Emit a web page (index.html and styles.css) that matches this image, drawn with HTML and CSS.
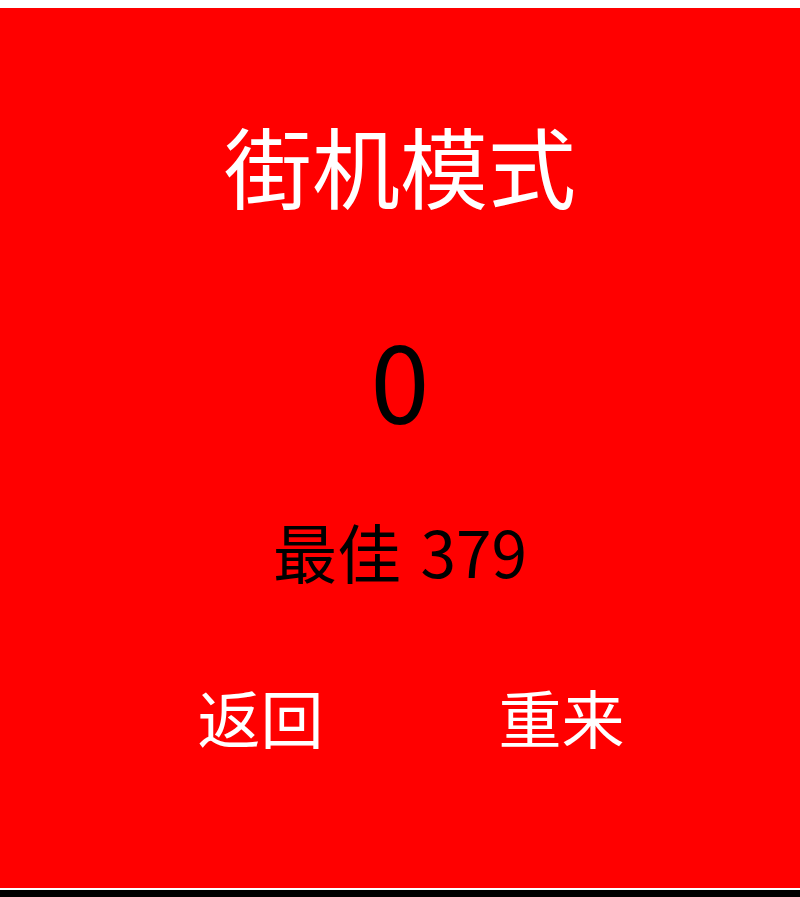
FILE: index.html
```html
<!DOCTYPE html>
<html lang="zh">
<head>
<meta charset="utf-8">
<link rel="stylesheet" href="styles.css">
</head>
<body>
<div class="screen">
  <h1 class="title">街机模式</h1>
  <div class="score">0</div>
  <div class="best">最佳 379</div>
  <div class="actions">
    <button class="btn btn-back">返回</button>
    <button class="btn btn-retry">重来</button>
  </div>
</div>
<div class="footer"></div>
</body>
</html>
```
FILE: styles.css
```css
html, body {
  margin: 0;
  padding: 0;
  background: #fff;
}
body {
  padding-top: 8px;
  font-family: "Noto Sans CJK SC", "Noto Sans", sans-serif;
  overflow: hidden;
  height: 897px;
  box-sizing: border-box;
}
.screen {
  background: #ff0000;
  height: 880px;
  display: flex;
  flex-direction: column;
  align-items: center;
}
.title {
  margin: 94px 0 0 0;
  font-size: 88px;
  font-weight: 400;
  line-height: 124px;
  color: #fff;
}
.score {
  margin-top: 87px;
  font-size: 106px;
  line-height: 130px;
  color: #000;
}
.best {
  margin-top: 67px;
  font-size: 64px;
  line-height: 80px;
  word-spacing: 5px;
  color: #000;
}
.actions {
  margin-top: 83px;
  display: flex;
  gap: 175px;
  padding-left: 22px;
}
.btn {
  background: none;
  border: none;
  padding: 0;
  font-family: inherit;
  font-size: 63px;
  line-height: 86px;
  color: #fff;
}
.footer {
  margin-top: 2px;
  height: 20px;
  background: #000;
}
```
